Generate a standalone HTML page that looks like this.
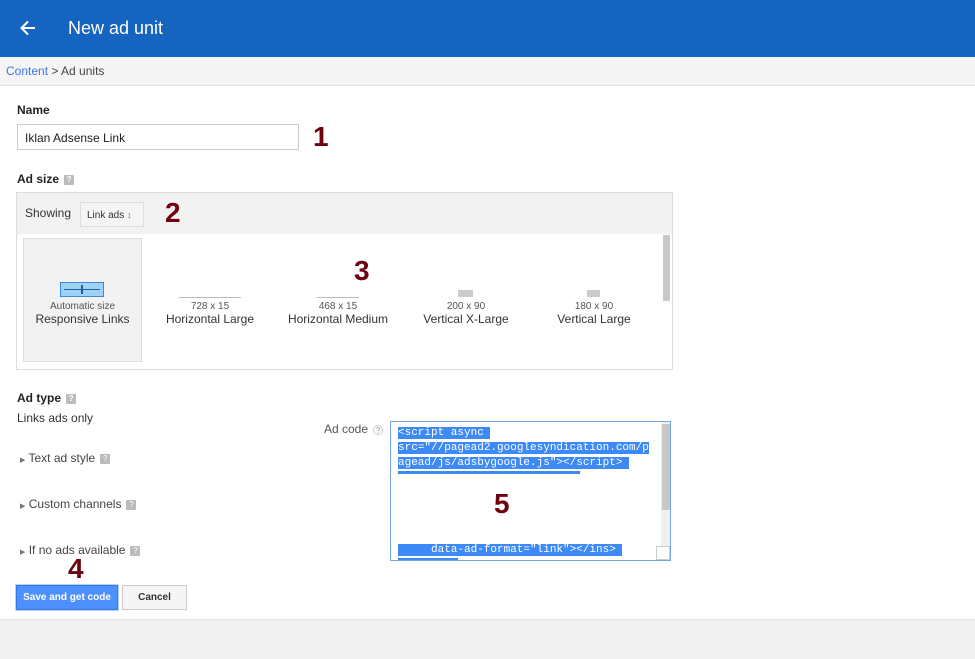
<!DOCTYPE html>
<html><head><meta charset="utf-8"><style>
*{box-sizing:border-box;margin:0;padding:0}
body{width:975px;height:659px;overflow:hidden;background:#fff;font-family:"Liberation Sans",Arial,sans-serif;color:#222;position:relative;font-size:12px}
.abs{position:absolute}
.hdr{left:0;top:0;width:975px;height:57px;background:#1565c0;box-shadow:0 2px 4px rgba(0,0,0,.3)}
.crumb{left:0;top:57px;width:975px;height:29px;background:#f5f5f5;border-bottom:1px solid #e0e0e0}
.lbl{font-weight:bold;font-size:12px}
.q{display:inline-block;width:10px;height:10px;background:#bbb;border-radius:1px;vertical-align:middle;margin-left:5px;color:#fff;font-size:8px;text-align:center;line-height:10px}
.num{color:#700010;font-weight:bold;font-size:28px;font-family:"Liberation Sans",Arial,sans-serif}
.item{text-align:center;color:#333}
.item .s{font-size:10px;color:#555}
.item .t{font-size:12px}
.sel{color:#444;font-size:12px}
.code{font-family:"Liberation Mono","Courier New",monospace;font-size:11px;color:#fff;line-height:15px}
.code div{height:15px}
.code span{background:#3d8af7;white-space:pre}
</style></head><body>
<div class="abs hdr">
<svg class="abs" style="left:19px;top:19px" width="18" height="18" viewBox="0 0 18 18"><path d="M16 9H3M9 2.5L2.5 9L9 15.5" stroke="#fff" stroke-width="2" fill="none"/></svg>
<div class="abs" style="left:68px;top:18px;color:#fff;font-size:18px">New ad unit</div>
</div>
<div class="abs crumb"><div class="abs" style="left:6px;top:7px;font-size:12px;color:#444"><span style="color:#3b78e7">Content</span> &gt; Ad units</div></div>

<div class="abs lbl" style="left:17px;top:103px">Name</div>
<div class="abs" style="left:17px;top:124px;width:282px;height:26px;border:1px solid #ccc;padding:6px 7px;font-size:12px">Iklan Adsense Link</div>
<div class="abs num" style="left:313px;top:121px">1</div>

<div class="abs lbl" style="left:17px;top:172px">Ad size<span class="q">?</span></div>
<div class="abs" style="left:16px;top:192px;width:657px;height:178px;border:1px solid #ddd">
 <div class="abs" style="left:0;top:0;width:655px;height:41px;background:#f2f2f2"></div>
 <div class="abs" style="left:8px;top:13px;font-size:12px;color:#333">Showing</div>
 <div class="abs" style="left:63px;top:9px;width:64px;height:25px;border:1px solid #ddd;background:#f5f5f5;font-size:10px;padding:7px 6px;color:#333;white-space:nowrap">Link ads <span style="font-size:9px;color:#777">&#8597;</span></div>
 <div class="abs num" style="left:148px;top:4px">2</div>
 <div class="abs" style="left:6px;top:45px;width:119px;height:124px;border:1px solid #ddd;background:#f2f2f2"></div>
 <div class="abs" style="left:43px;top:89px;width:44px;height:15px;background:#9ed3f7;border:1px solid #3a8cd0"></div>
 <div class="abs" style="left:47px;top:96px;width:36px;height:1px;background:#1e5fa0"></div>
 <div class="abs" style="left:64px;top:92px;width:2px;height:9px;background:#1e5fa0"></div>
 <div class="abs item" style="left:6px;top:108px;width:119px"><div class="s">Automatic size</div><div class="t">Responsive Links</div></div>
 <div class="abs" style="left:162px;top:104px;width:62px;height:1px;background:#bbb"></div>
 <div class="abs item" style="left:133px;top:108px;width:120px"><div class="s">728 x 15</div><div class="t">Horizontal Large</div></div>
 <div class="abs" style="left:300px;top:104px;width:42px;height:1px;background:#bbb"></div>
 <div class="abs item" style="left:260px;top:108px;width:122px"><div class="s">468 x 15</div><div class="t">Horizontal Medium</div></div>
 <div class="abs num" style="left:337px;top:62px">3</div>
 <div class="abs" style="left:441px;top:97px;width:15px;height:7px;background:#ccc"></div>
 <div class="abs item" style="left:389px;top:108px;width:120px"><div class="s">200 x 90</div><div class="t">Vertical X-Large</div></div>
 <div class="abs" style="left:570px;top:97px;width:13px;height:7px;background:#ccc"></div>
 <div class="abs item" style="left:517px;top:108px;width:120px"><div class="s">180 x 90</div><div class="t">Vertical Large</div></div>
 <div class="abs" style="left:646px;top:42px;width:7px;height:66px;background:#c8c8c8"></div>
</div>

<div class="abs lbl" style="left:17px;top:391px">Ad type<span class="q">?</span></div>
<div class="abs" style="left:17px;top:411px;color:#333">Links ads only</div>
<div class="abs sel" style="left:20px;top:451px"><span style="font-size:7px;color:#777">&#9654;</span> Text ad style<span class="q">?</span></div>
<div class="abs sel" style="left:20px;top:497px"><span style="font-size:7px;color:#777">&#9654;</span> Custom channels<span class="q">?</span></div>
<div class="abs sel" style="left:20px;top:543px"><span style="font-size:7px;color:#777">&#9654;</span> If no ads available<span class="q">?</span></div>

<div class="abs" style="left:324px;top:422px;color:#555">Ad code<span class="q" style="background:#fff;border:1px solid #ccc;color:#999;border-radius:50%">?</span></div>
<div class="abs" style="left:390px;top:421px;width:281px;height:140px;border:1px solid #7aa6e0;overflow:hidden">
 <div class="abs code" style="left:7px;top:4px;width:260px"><div><span>&lt;script async </span></div><div><span>src="//pagead2.googlesyndication.com/p</span></div><div><span>agead/js/adsbygoogle.js"&gt;&lt;/script&gt; </span></div></div>
 <div class="abs" style="left:7px;top:49px;width:182px;height:3px;background:#3d8af7"></div>
 <div class="abs code" style="left:7px;top:121px"><div><span>     data-ad-format="link"&gt;&lt;/ins&gt; </span></div></div>
 <div class="abs" style="left:7px;top:136px;width:60px;height:4px;background:#3d8af7"></div>
 <div class="abs" style="left:270px;top:0;width:10px;height:138px;background:#f0f0f0"></div>
 <div class="abs" style="left:271px;top:2px;width:8px;height:86px;background:#c8c8c8"></div>
 <div class="abs" style="left:265px;top:124px;width:14px;height:14px;background:#fff;border:1px solid #ccc"></div>
 <div class="abs num" style="left:103px;top:66px">5</div>
</div>

<div class="abs num" style="left:68px;top:553px">4</div>
<div class="abs" style="left:16px;top:585px;width:102px;height:25px;background:#4d90fe;border:1px solid #3079ed;color:#fff;font-weight:bold;font-size:10px;text-align:center;line-height:23px;box-shadow:0 0 0 1px #bcd4fb">Save and get code</div>
<div class="abs" style="left:122px;top:585px;width:65px;height:25px;background:#f5f5f5;border:1px solid #ccc;color:#333;font-weight:bold;font-size:10px;text-align:center;line-height:23px">Cancel</div>
<div class="abs" style="left:0;top:619px;width:975px;height:40px;background:#f1f1f1;border-top:1px solid #e5e5e5"></div>
</body></html>
